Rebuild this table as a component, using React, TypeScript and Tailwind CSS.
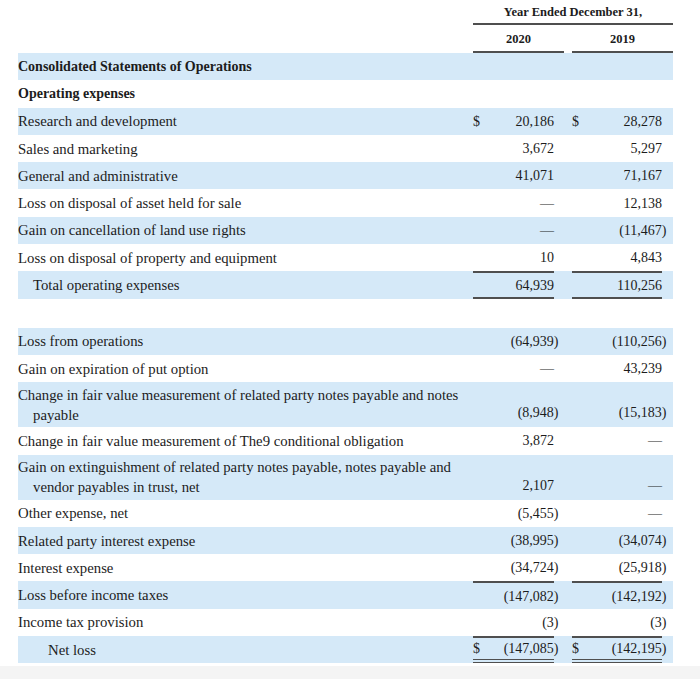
type Row = {
  label: string;
  second?: string;
  bold?: boolean;
  indent?: number;
  v1?: string;
  v2?: string;
  dollar?: boolean;
  top?: boolean;
  bottom?: "single" | "double";
};

const ROWS: (Row | null)[] = [
  { label: "Consolidated Statements of Operations", bold: true },
  { label: "Operating expenses", bold: true },
  { label: "Research and development", v1: "20,186", v2: "28,278", dollar: true },
  { label: "Sales and marketing", v1: "3,672", v2: "5,297" },
  { label: "General and administrative", v1: "41,071", v2: "71,167" },
  { label: "Loss on disposal of asset held for sale", v1: "—", v2: "12,138" },
  { label: "Gain on cancellation of land use rights", v1: "—", v2: "(11,467)" },
  { label: "Loss on disposal of property and equipment", v1: "10", v2: "4,843" },
  { label: "Total operating expenses", indent: 1, v1: "64,939", v2: "110,256", top: true, bottom: "single" },
  null,
  { label: "Loss from operations", v1: "(64,939)", v2: "(110,256)" },
  { label: "Gain on expiration of put option", v1: "—", v2: "43,239" },
  {
    label: "Change in fair value measurement of related party notes payable and notes",
    second: "payable",
    v1: "(8,948)",
    v2: "(15,183)",
  },
  { label: "Change in fair value measurement of The9 conditional obligation", v1: "3,872", v2: "—" },
  {
    label: "Gain on extinguishment of related party notes payable, notes payable and",
    second: "vendor payables in trust, net",
    v1: "2,107",
    v2: "—",
  },
  { label: "Other expense, net", v1: "(5,455)", v2: "—" },
  { label: "Related party interest expense", v1: "(38,995)", v2: "(34,074)" },
  { label: "Interest expense", v1: "(34,724)", v2: "(25,918)" },
  { label: "Loss before income taxes", v1: "(147,082)", v2: "(142,192)", top: true },
  { label: "Income tax provision", v1: "(3)", v2: "(3)" },
  { label: "Net loss", indent: 2, v1: "(147,085)", v2: "(142,195)", dollar: true, top: true, bottom: "double" },
];

function Amount({ value, dollar, row, width }: { value?: string; dollar?: boolean; row: Row; width: string }) {
  const neg = value?.startsWith("(");
  return (
    <div
      className={`flex h-full ${width} justify-between border-[#4f4f4f] ${row.top ? "border-t-2" : ""} ${
        row.bottom === "single" ? "border-b-2" : row.bottom === "double" ? "border-b-[4px] border-double" : ""
      } ${row.second ? "items-end pb-[4px]" : "items-center"}`}
    >
      <span>{dollar ? "$" : ""}</span>
      <span className={neg ? "mr-[-4.5px]" : ""}>{value}</span>
    </div>
  );
}

export default function App() {
  return (
    <div className="relative h-[679px] w-[700px] overflow-hidden bg-white text-[#1c1c1c]" style={{ fontFamily: '"Liberation Serif", "Times New Roman", serif' }}>
      <div className="pl-[18px]">
        {/* column headers */}
        <div className="flex">
          <div className="w-[455px]" />
          <div className="w-[200px] border-b-2 border-[#4f4f4f] pt-[4px] pb-[3px] text-center text-[12.5px] font-bold leading-[16px]">
            Year Ended December 31,
          </div>
        </div>
        <div className="flex text-[12.5px] font-bold leading-[16px]">
          <div className="w-[455px]" />
          <div className="w-[91px] border-b-2 border-[#4f4f4f] pt-[6px] pb-[4px] text-center">2020</div>
          <div className="w-[8px]" />
          <div className="w-[101px] border-b-2 border-[#4f4f4f] pt-[6px] pb-[4px] text-center">2019</div>
        </div>

        {ROWS.map((row, i) => {
          const band = i % 2 === 0 ? "bg-[#d5e9f8]" : "";
          if (!row) return <div key={i} className="h-[29px]" />;
          return (
            <div key={i} className={`flex w-[655px] ${row.second ? "h-[45px]" : "h-[27.3px]"} ${band}`}>
              <div
                className={`flex w-[455px] flex-col justify-center ${row.bold ? "text-[14px] font-bold" : "text-[14.75px]"} leading-[20px] ${
                  row.indent === 1 ? "pl-[15px]" : row.indent === 2 ? "pl-[30px]" : ""
                }`}
              >
                <div className="whitespace-nowrap">{row.label}</div>
                {row.second && <div className="pl-[15px]">{row.second}</div>}
              </div>
              <div className="flex h-full w-[91px] text-[14px]">
                {row.v1 !== undefined && <Amount value={row.v1} dollar={row.dollar} row={row} width="w-[81px]" />}
              </div>
              <div className="w-[8px]" />
              <div className="flex h-full w-[101px] text-[14px]">
                {row.v2 !== undefined && <Amount value={row.v2} dollar={row.dollar} row={row} width="w-[90px]" />}
              </div>
            </div>
          );
        })}
      </div>
      <div className="absolute bottom-0 left-0 h-[13px] w-full bg-[#f4f4f4]" />
    </div>
  );
}
